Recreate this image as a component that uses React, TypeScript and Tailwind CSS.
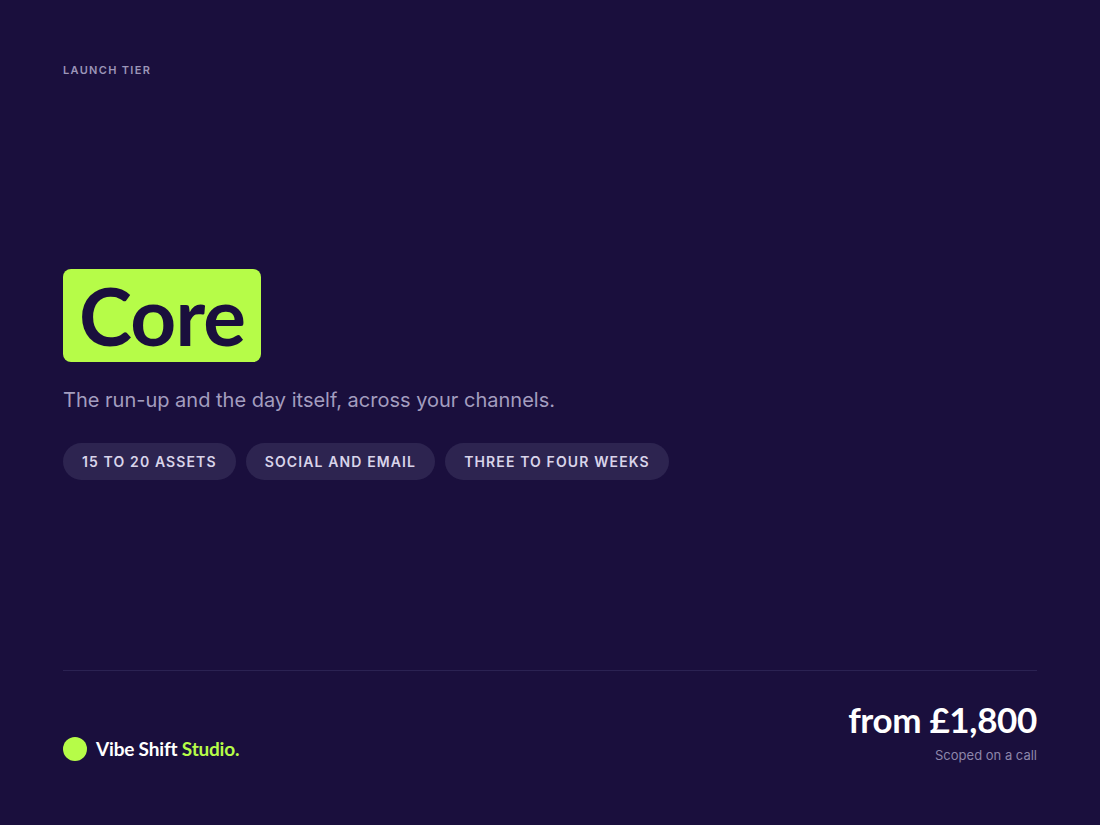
import React from "react";

const pills = ["15 to 20 assets", "Social and email", "Three to four weeks"];

export default function App() {
  return (
    <div
      className="flex h-[825px] w-full flex-col bg-[#1a0f3d] px-[63px]"
      style={{ fontFamily: "Inter, 'Liberation Sans', sans-serif" }}
    >
      <div className="pt-[62px]">
        <p className="text-[11px] font-semibold uppercase leading-4 tracking-[0.12em] text-[#9c95b8]">
          Launch tier
        </p>
      </div>

      <div className="flex flex-1 flex-col justify-center">
        <div className="flex">
          <h1 className="flex h-[93px] items-center rounded-[8px] bg-[#b6fc48] px-[16px] font-['Lato',_'Open_Sans',_sans-serif] text-[80px] font-bold leading-none tracking-[-0.01em] text-[#1a0f3d]">
            Core
          </h1>
        </div>
        <p className="mt-[24px] text-[20px] leading-7 text-[#a39dbf]">
          The run-up and the day itself, across your channels.
        </p>
        <div className="mt-[29px] flex gap-[10px]">
          {pills.map((p) => (
            <span
              key={p}
              className="flex h-[37px] items-center rounded-full bg-[#2d2450] px-[19px] text-[14px] font-semibold uppercase tracking-[0.08em] text-[#d9d4ea]"
            >
              {p}
            </span>
          ))}
        </div>
      </div>

      <div className="flex h-[155px] items-end justify-between border-t border-[#2b2252] pb-[62px]">
        <div className="flex items-center gap-[9px]">
          <span className="h-[24px] w-[24px] rounded-full bg-[#b6fc48]" />
          <span className="font-['Lato',_'Open_Sans',_sans-serif] text-[19px] font-bold tracking-[-0.01em] text-white">
            Vibe Shift <span className="text-[#b6fc48]">Studio.</span>
          </span>
        </div>
        <div className="flex flex-col items-end">
          <span className="font-['Lato',_'Open_Sans',_sans-serif] text-[35px] font-bold leading-[40px] tracking-[-0.01em] text-white">
            from £1,800
          </span>
          <span className="mt-[8px] text-[13px] leading-4 text-[#8d86aa]">
            Scoped on a call
          </span>
        </div>
      </div>
    </div>
  );
}
